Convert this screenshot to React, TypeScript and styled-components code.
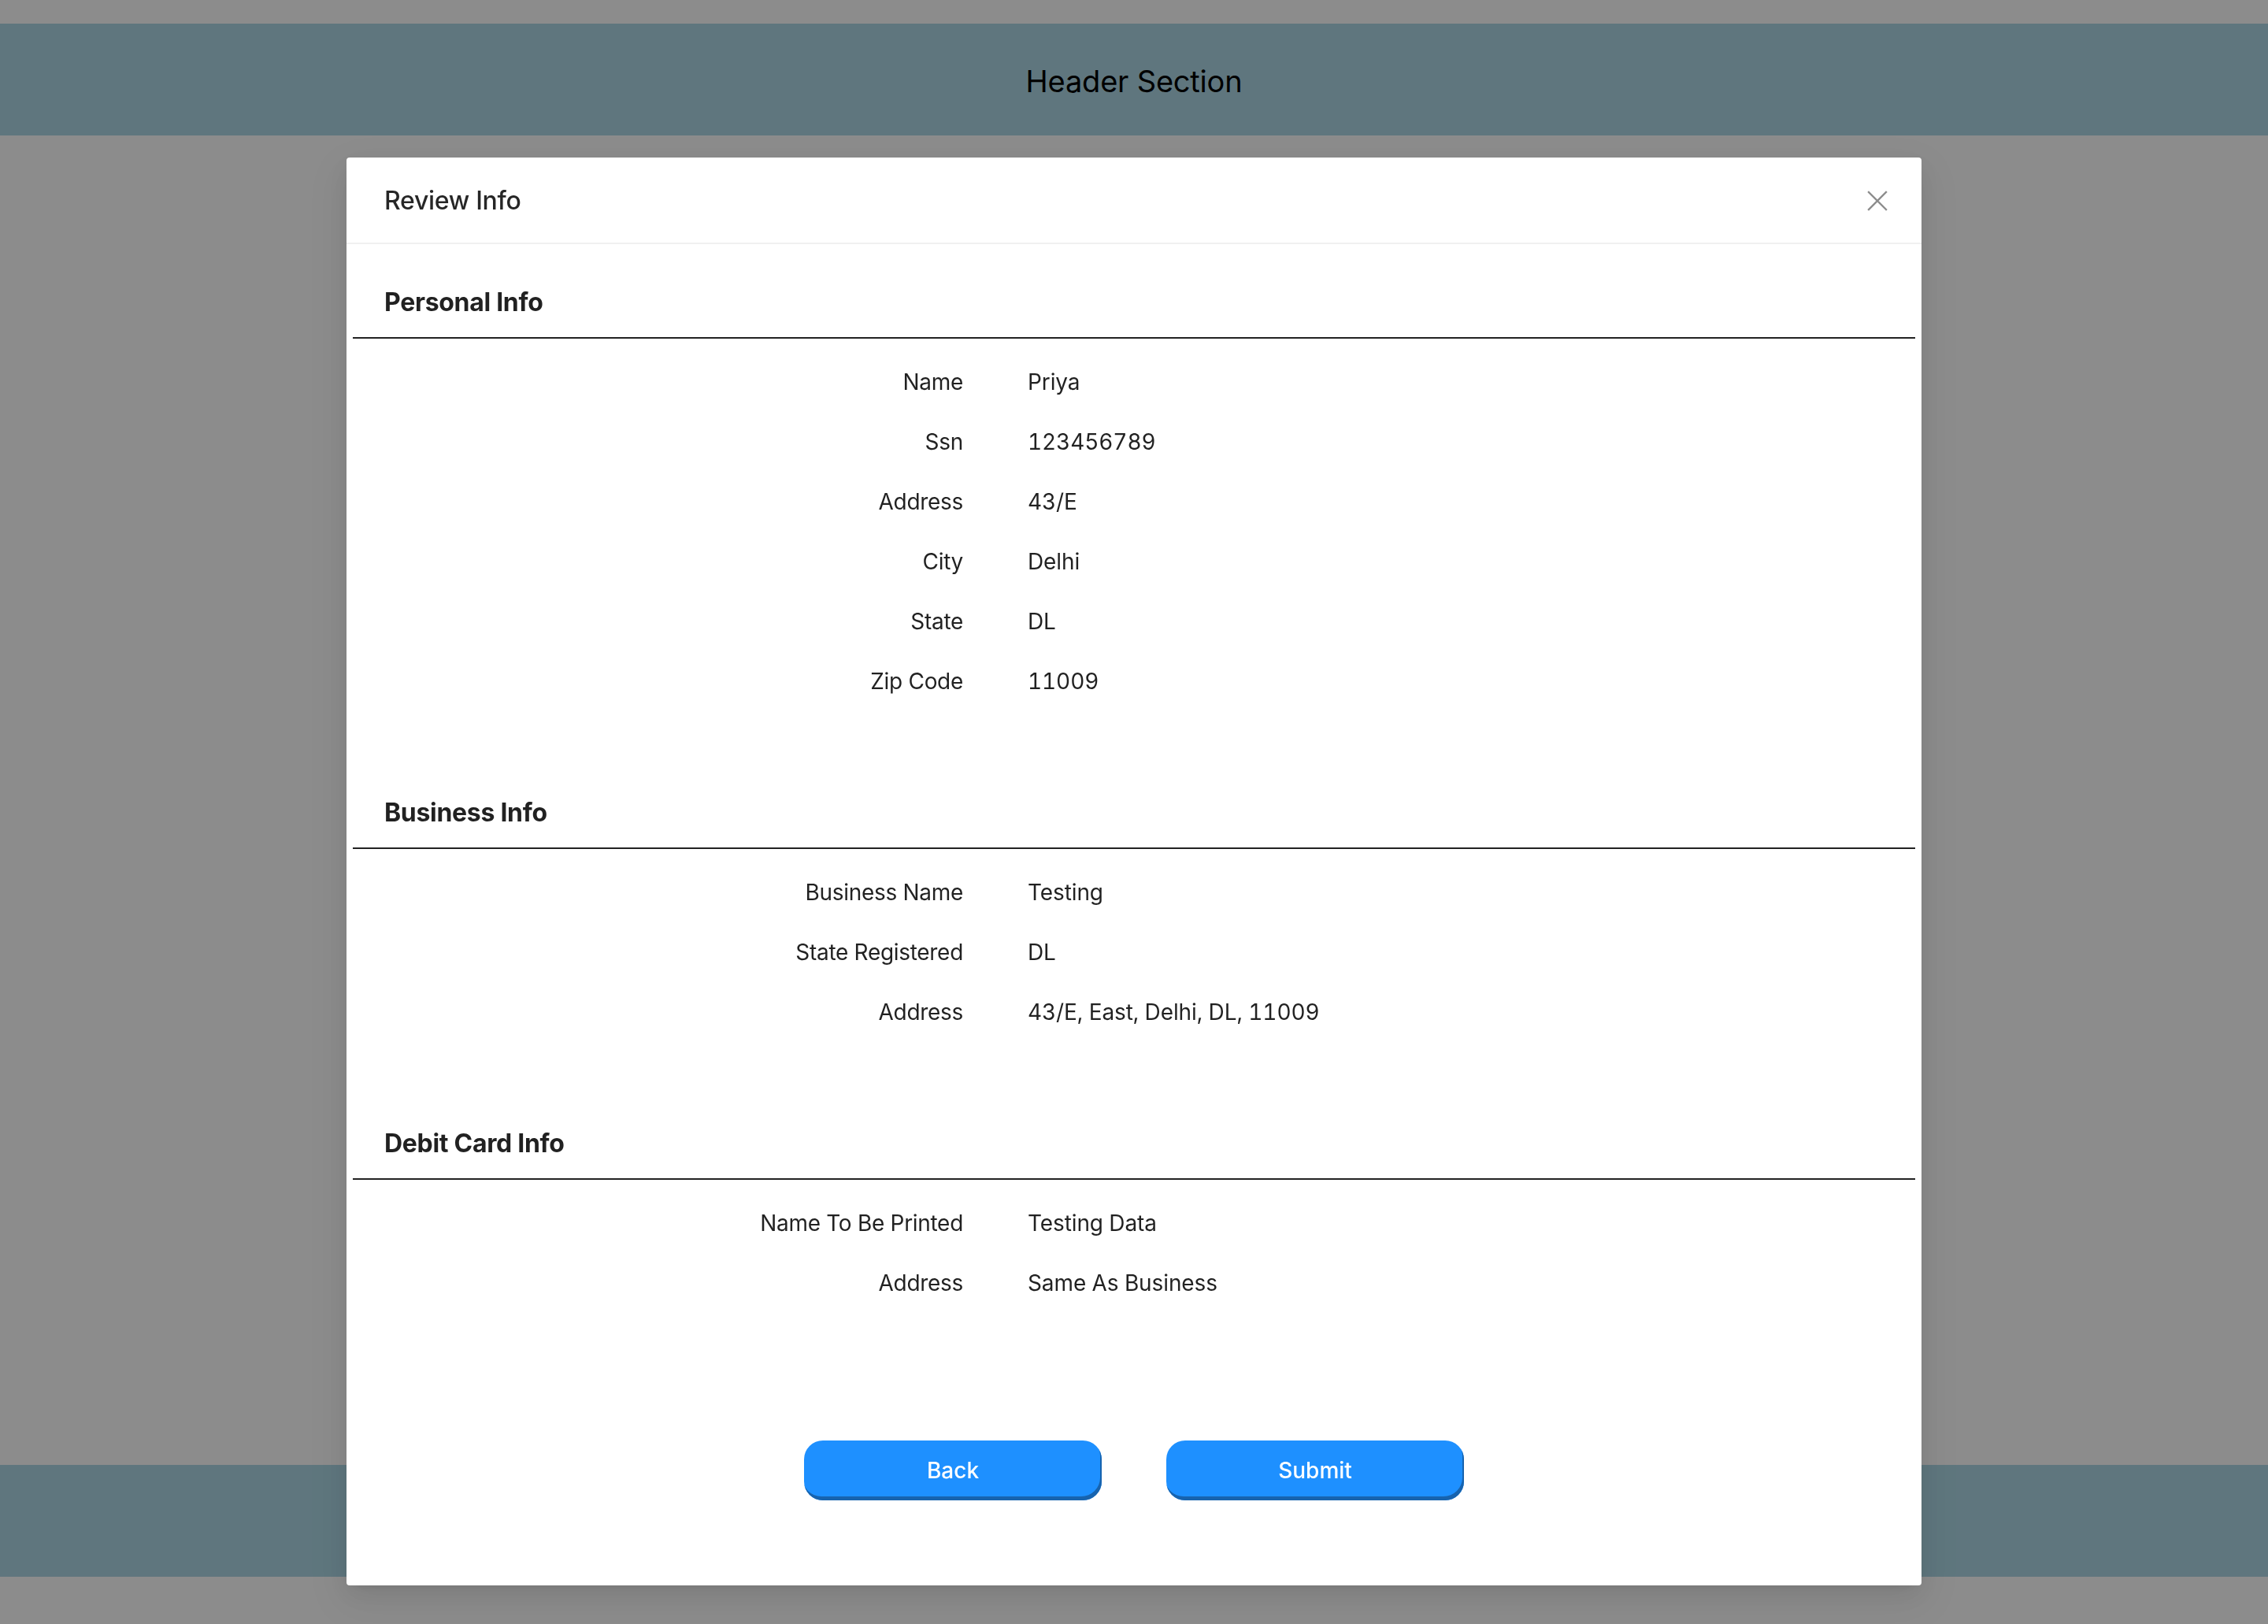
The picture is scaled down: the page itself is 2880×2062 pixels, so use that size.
import React from "react";
import styled, { createGlobalStyle } from "styled-components";

const GlobalStyle = createGlobalStyle`
  html, body {
    margin: 0;
    padding: 0;
  }
  body {
    font-family: Inter, "Noto Sans", "Liberation Sans", sans-serif;
    background: #ffffff;
  }
  * {
    box-sizing: border-box;
  }
`;

const Page = styled.div`
  display: flex;
  flex-direction: column;
  min-height: 2062px;
  padding: 30px 0 60px;
`;

const TopBar = styled.header`
  height: 142px;
  padding-top: 3px;
  background: #add8e6;
  display: flex;
  align-items: center;
  justify-content: center;
  font-size: 38px;
  letter-spacing: -0.2px;
  color: #000;
`;

const Main = styled.main`
  flex: 1;
`;

const BottomBar = styled.footer`
  height: 142px;
  background: #add8e6;
`;

const Mask = styled.div`
  position: fixed;
  inset: 0;
  background: rgba(0, 0, 0, 0.45);
`;

const ModalWrap = styled.div`
  position: fixed;
  inset: 0;
  display: flex;
  justify-content: center;
  align-items: flex-start;
  padding-top: 200px;
`;

const Modal = styled.div`
  width: 2000px;
  background: #fff;
  border-radius: 4px;
  box-shadow: 0 6px 12px -8px rgba(0, 0, 0, 0.12),
    0 12px 32px 0 rgba(0, 0, 0, 0.08), 0 18px 56px 16px rgba(0, 0, 0, 0.05);
`;

const ModalHeader = styled.div`
  display: flex;
  align-items: center;
  justify-content: space-between;
  height: 110px;
  padding: 2px 0 0 48px;
  border-bottom: 2px solid #f0f0f0;
`;

const Title = styled.div`
  font-size: 32px;
  line-height: 44px;
  font-weight: 500;
  letter-spacing: -0.3px;
  color: rgba(0, 0, 0, 0.85);
`;

const CloseButton = styled.button`
  width: 112px;
  height: 108px;
  border: none;
  background: transparent;
  padding: 0;
  display: flex;
  align-items: center;
  justify-content: center;
  cursor: pointer;
`;

const Body = styled.div`
  padding: 52px 8px 108px;
`;

const Section = styled.section`
  padding-bottom: 123px;
`;

const SectionTitle = styled.h3`
  margin: 0;
  padding-left: 40px;
  font-size: 32px;
  line-height: 44px;
  font-weight: 700;
  letter-spacing: -0.3px;
  color: rgba(0, 0, 0, 0.87);
`;

const Rule = styled.div`
  height: 2px;
  background: #222;
  margin: 22px 0 33px;
`;

const Grid = styled.div`
  display: grid;
  grid-template-columns: 775px 1fr;
  column-gap: 82px;
  row-gap: 32px;
`;

const Label = styled.div`
  text-align: right;
  font-size: 28px;
  line-height: 44px;
  letter-spacing: -0.3px;
  color: rgba(0, 0, 0, 0.87);
`;

const Value = styled.div`
  font-size: 28px;
  line-height: 44px;
  letter-spacing: -0.1px;
  font-variant-numeric: tabular-nums;
  color: rgba(0, 0, 0, 0.87);
`;

const ButtonBar = styled.div`
  display: flex;
  justify-content: center;
  gap: 82px;
  margin-top: 55px;
`;

const ActionButton = styled.button`
  width: 378px;
  height: 76px;
  border: none;
  border-radius: 24px;
  background: #1e90ff;
  color: #fff;
  font-family: inherit;
  font-size: 28px;
  font-weight: 500;
  padding: 0;
  box-shadow: inset -2px -5px 0 #1763ae;
  cursor: pointer;
`;

type Row = [string, string];

const sections: { title: string; rows: Row[] }[] = [
  {
    title: "Personal Info",
    rows: [
      ["Name", "Priya"],
      ["Ssn", "123456789"],
      ["Address", "43/E"],
      ["City", "Delhi"],
      ["State", "DL"],
      ["Zip Code", "11009"],
    ],
  },
  {
    title: "Business Info",
    rows: [
      ["Business Name", "Testing"],
      ["State Registered", "DL"],
      ["Address", "43/E, East, Delhi, DL, 11009"],
    ],
  },
  {
    title: "Debit Card Info",
    rows: [
      ["Name To Be Printed", "Testing Data"],
      ["Address", "Same As Business"],
    ],
  },
];

const CloseIcon = () => (
  <svg width="26" height="26" viewBox="0 0 26 26" fill="none">
    <path
      d="M2 2 L24 24 M24 2 L2 24"
      stroke="rgba(0,0,0,0.45)"
      strokeWidth="2.4"
      strokeLinecap="square"
    />
  </svg>
);

export default function App() {
  return (
    <>
      <GlobalStyle />
      <Page>
        <TopBar>Header Section</TopBar>
        <Main />
        <BottomBar />
      </Page>
      <Mask />
      <ModalWrap>
        <Modal role="dialog">
          <ModalHeader>
            <Title>Review Info</Title>
            <CloseButton aria-label="Close">
              <CloseIcon />
            </CloseButton>
          </ModalHeader>
          <Body>
            {sections.map((s) => (
              <Section key={s.title}>
                <SectionTitle>{s.title}</SectionTitle>
                <Rule />
                <Grid>
                  {s.rows.map(([label, value]) => (
                    <React.Fragment key={label}>
                      <Label>{label}</Label>
                      <Value>{value}</Value>
                    </React.Fragment>
                  ))}
                </Grid>
              </Section>
            ))}
            <ButtonBar>
              <ActionButton>Back</ActionButton>
              <ActionButton>Submit</ActionButton>
            </ButtonBar>
          </Body>
        </Modal>
      </ModalWrap>
    </>
  );
}
